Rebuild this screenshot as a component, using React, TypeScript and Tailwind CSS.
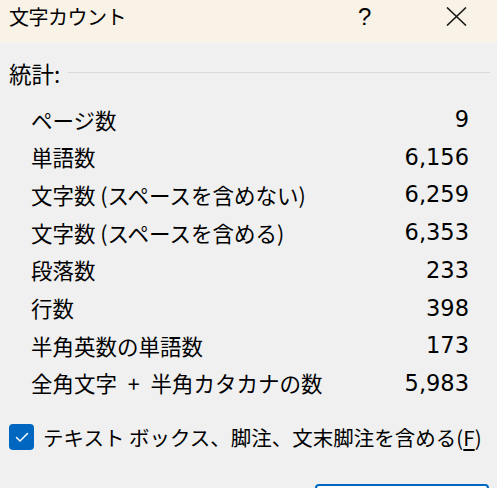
import React from "react";

const rows: [string, string][] = [
  ["ページ数", "9"],
  ["単語数", "6,156"],
  ["文字数 (スペースを含めない)", "6,259"],
  ["文字数 (スペースを含める)", "6,353"],
  ["段落数", "233"],
  ["行数", "398"],
  ["半角英数の単語数", "173"],
  ["全角文字 + 半角カタカナの数", "5,983"],
];

const jp = { fontFamily: '"Noto Sans CJK JP", "Noto Sans", sans-serif' };
const num = { fontFamily: '"DejaVu Sans", Verdana, sans-serif' };

function Label({ text }: { text: string }) {
  if (text.includes(" + ")) {
    const [a, b] = text.split(" + ");
    return (
      <span className="text-[21.5px] leading-none whitespace-nowrap">
        {a}
        <span className="mx-[6px]"> + </span>
        {b}
      </span>
    );
  }
  return <span className="text-[21.5px] leading-none whitespace-nowrap">{text}</span>;
}

export default function App() {
  return (
    <div className="w-[497px] h-[488px] overflow-hidden bg-[#f0f0f0] text-black flex flex-col" style={jp}>
      <div className="h-[43px] shrink-0 bg-[#f9f2e7] flex items-center pl-[9px]">
        <span className="text-[20px] leading-none -mt-[10px]" style={{ letterSpacing: "-0.5px" }}>文字カウント</span>
        <span className="ml-auto text-[24px] leading-none -mt-[10px] w-[14px]" style={{ fontFamily: '"Liberation Sans", sans-serif' }}>?</span>
        <svg className="ml-[74px] mr-[30px] -mt-[10px]" width="21" height="19" viewBox="0 0 21 19">
          <path d="M1 0.5 L20 18.5 M20 0.5 L1 18.5" stroke="#1a1a1a" strokeWidth="1.6" fill="none" />
        </svg>
      </div>
      <div className="flex items-center pl-[9px] pr-[7px] mt-[19px] h-[24px]">
        <span className="text-[22.5px] leading-none">統計:</span>
        <div className="flex-1 h-px bg-[#d9d9d9] ml-[8px] -mt-[2px]" />
      </div>
      <div className="flex flex-col mt-[16px] pl-[31px] pr-[28px]">
        {rows.map(([label, value]) => (
          <div key={label} className="h-[37.7px] flex items-center justify-between">
            <Label text={label} />
            <span className="text-[22.5px] leading-none" style={num}>{value}</span>
          </div>
        ))}
      </div>
      <div className="flex items-center pl-[9px] mt-[22px]">
        <div className="w-[25px] h-[26px] rounded-[4px] bg-[#0067c0] flex items-center justify-center">
          <svg width="14" height="11" viewBox="0 0 14 11">
            <path d="M1.5 5.5 L5 9 L12.5 1.5" stroke="#ffffff" strokeWidth="1.5" fill="none" strokeLinecap="round" strokeLinejoin="round" />
          </svg>
        </div>
        <span className="ml-[9px] text-[20.5px] leading-none whitespace-nowrap">
          テキスト ボックス、脚注、文末脚注を含める(<span className="underline underline-offset-[3px]">F</span>)
        </span>
      </div>
      <div className="flex justify-end pr-[8px] mt-[34px]">
        <div className="w-[174px] h-[30px] shrink-0 rounded-[4px] border-2 border-[#0067c0] bg-white" />
      </div>
    </div>
  );
}
